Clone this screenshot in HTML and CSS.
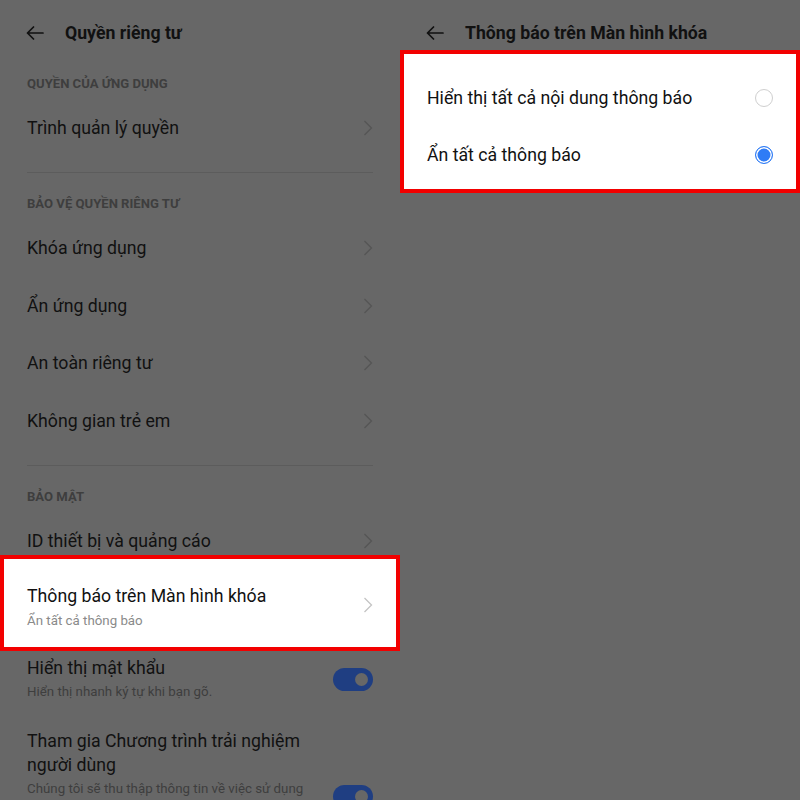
FILE: index.html
```html
<!DOCTYPE html>
<html lang="vi">
<head>
<meta charset="utf-8">
<title>Quyền riêng tư</title>
<link rel="stylesheet" href="styles.css">
</head>
<body>
<div class="screen">
  <section class="panel left">
    <header class="appbar">
      <svg class="back" viewBox="0 0 18 14" width="18" height="14"><path d="M17 7H1.5M7.5 1L1.5 7l6 6" fill="none" stroke="#111" stroke-width="1.7" stroke-linecap="round" stroke-linejoin="round"/></svg>
      <h1 class="title">Quyền riêng tư</h1>
    </header>

    <div class="sec first">QUYỀN CỦA ỨNG DỤNG</div>
    <div class="row"><span class="label">Trình quản lý quyền</span><svg class="chev" viewBox="0 0 10 16" width="10" height="16"><path d="M1.5 1l7 7-7 7" fill="none" stroke-width="1.3"/></svg></div>
    <div class="divider"></div>

    <div class="sec">BẢO VỆ QUYỀN RIÊNG TƯ</div>
    <div class="row"><span class="label">Khóa ứng dụng</span><svg class="chev" viewBox="0 0 10 16" width="10" height="16"><path d="M1.5 1l7 7-7 7" fill="none" stroke-width="1.3"/></svg></div>
    <div class="row"><span class="label">Ẩn ứng dụng</span><svg class="chev" viewBox="0 0 10 16" width="10" height="16"><path d="M1.5 1l7 7-7 7" fill="none" stroke-width="1.3"/></svg></div>
    <div class="row"><span class="label">An toàn riêng tư</span><svg class="chev" viewBox="0 0 10 16" width="10" height="16"><path d="M1.5 1l7 7-7 7" fill="none" stroke-width="1.3"/></svg></div>
    <div class="row"><span class="label">Không gian trẻ em</span><svg class="chev" viewBox="0 0 10 16" width="10" height="16"><path d="M1.5 1l7 7-7 7" fill="none" stroke-width="1.3"/></svg></div>
    <div class="divider"></div>

    <div class="sec">BẢO MẬT</div>
    <div class="row"><span class="label">ID thiết bị và quảng cáo</span><svg class="chev" viewBox="0 0 10 16" width="10" height="16"><path d="M1.5 1l7 7-7 7" fill="none" stroke-width="1.3"/></svg></div>

    <div class="hlrow">
      <div class="texts">
        <div class="label">Thông báo trên Màn hình khóa</div>
        <div class="sub">Ẩn tất cả thông báo</div>
      </div>
      <svg class="chev light" viewBox="0 0 10 16" width="10" height="16"><path d="M1.5 1l7 7-7 7" fill="none" stroke-width="1.3"/></svg>
    </div>

    <div class="trow first">
      <div class="texts">
        <div class="label">Hiển thị mật khẩu</div>
        <div class="sub">Hiển thị nhanh ký tự khi bạn gõ.</div>
      </div>
      <div class="toggle"><span class="knob"></span></div>
    </div>

    <div class="trow second">
      <div class="texts">
        <div class="label multi">Tham gia Chương trình trải nghiệm người dùng</div>
        <div class="sub">Chúng tôi sẽ thu thập thông tin về việc sử dụng</div>
      </div>
      <div class="toggle top"><span class="knob"></span></div>
    </div>
  </section>

  <section class="panel right">
    <header class="appbar short">
      <svg class="back" viewBox="0 0 18 14" width="18" height="14"><path d="M17 7H1.5M7.5 1L1.5 7l6 6" fill="none" stroke="#111" stroke-width="1.7" stroke-linecap="round" stroke-linejoin="round"/></svg>
      <h1 class="title">Thông báo trên Màn hình khóa</h1>
    </header>
    <div class="hlbox">
      <div class="rrow"><span class="label">Hiển thị tất cả nội dung thông báo</span><span class="radio"></span></div>
      <div class="rrow"><span class="label">Ẩn tất cả thông báo</span><span class="radio on"></span></div>
    </div>
  </section>
</div>
</body>
</html>
```

FILE: styles.css
```css
html, body {
  margin: 0;
  padding: 0;
}
body {
  font-family: Roboto, "Noto Sans", "Liberation Sans", sans-serif;
  color: #111;
  background: #676767;
}
.screen {
  display: flex;
  width: 800px;
  height: 800px;
  overflow: hidden;
  background: #676767;
}
.panel {
  width: 400px;
  flex: 0 0 400px;
  height: 800px;
  overflow: hidden;
  display: flex;
  flex-direction: column;
}
.appbar {
  height: 66px;
  flex: 0 0 66px;
  box-sizing: border-box;
  display: flex;
  align-items: center;
  padding-left: 26px;
}
.appbar.short {
  height: 50px;
  flex-basis: 50px;
  padding-top: 16px;
}
.back {
  margin-right: 21px;
  flex: 0 0 auto;
}
.title {
  margin: 0;
  font-size: 17.7px;
  font-weight: 700;
  color: #111;
}
.sec {
  height: 31px;
  flex: 0 0 31px;
  display: flex;
  align-items: center;
  padding: 0 27px;
  margin-top: 15px;
  font-size: 13.1px;
  font-weight: 700;
  color: #3e3e3e;
}
.sec.first {
  margin-top: 2px;
}
.row {
  height: 57.5px;
  flex: 0 0 57.5px;
  box-sizing: border-box;
  display: flex;
  align-items: center;
  justify-content: space-between;
  padding: 1px 27px 0;
}
.label {
  font-size: 17.7px;
  line-height: 22px;
  color: #111;
}
.chev {
  stroke: #555;
  flex: 0 0 auto;
}
.chev.light {
  stroke: #c4c4c4;
  margin-top: 4px;
}
.divider {
  height: 1px;
  flex: 0 0 1px;
  margin: 15.5px 27px 0;
  background: #5c5c5c;
}
.hlrow {
  margin-top: -14px;
  height: 96px;
  flex: 0 0 96px;
  box-sizing: border-box;
  background: #fff;
  border: 4px solid #f20000;
  display: flex;
  align-items: center;
  justify-content: space-between;
  padding: 0 23px;
}
.hlrow .texts {
  padding-top: 8px;
}
.hlrow .sub {
  color: #8a8a8a;
  margin-top: 5px;
}
.sub {
  font-size: 13.3px;
  line-height: 18px;
  margin-top: 5px;
  color: #3e3e3e;
}
.trow {
  display: flex;
  justify-content: space-between;
  padding: 0 27px;
  flex: 0 0 auto;
}
.trow.first {
  align-items: center;
  padding-top: 6px;
}
.trow.first .sub {
  margin-top: 4px;
}
.trow.second {
  margin-top: 28px;
  align-items: flex-start;
}
.trow .texts {
  max-width: 300px;
}
.label.multi {
  line-height: 24px;
}
.trow.second .sub {
  margin-top: 3px;
}
.toggle {
  width: 40px;
  height: 23px;
  border-radius: 12px;
  background: #1f3e82;
  position: relative;
  flex: 0 0 auto;
}
.toggle.top {
  margin-top: 56px;
}
.knob {
  position: absolute;
  right: 5px;
  top: 5px;
  width: 13px;
  height: 13px;
  border-radius: 50%;
  background: #676767;
}
.hlbox {
  height: 143px;
  flex: 0 0 143px;
  box-sizing: border-box;
  background: #fff;
  border: 4px solid #f20000;
  padding: 15.5px 23px 0;
}
.rrow {
  height: 57px;
  display: flex;
  align-items: center;
  justify-content: space-between;
}
.radio {
  width: 18px;
  height: 18px;
  box-sizing: border-box;
  border-radius: 50%;
  border: 1.5px solid #cfcfcf;
  flex: 0 0 auto;
}
.radio.on {
  border-color: #2f7cf6;
  background: #2f7cf6;
  box-shadow: inset 0 0 0 1.5px #fff;
}
```
